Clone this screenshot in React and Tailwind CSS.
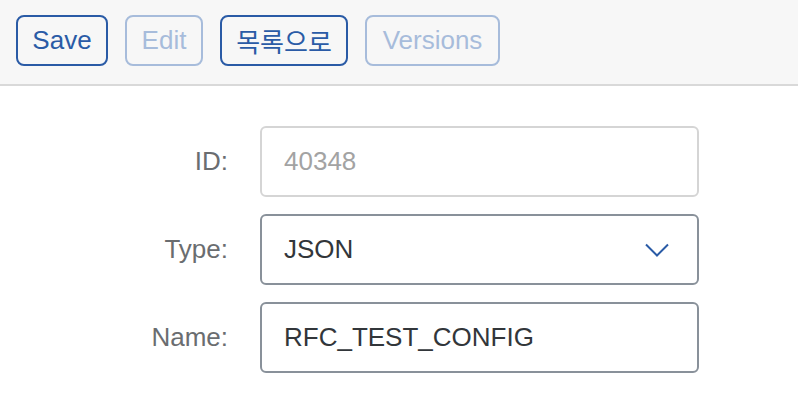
export default function App() {
  const font = { fontFamily: '"Liberation Sans", Arial, "Noto Sans CJK KR", sans-serif' };
  return (
    <div className="w-[798px] h-[418px] bg-white overflow-hidden" style={font}>
      <div className="h-[86px] bg-[#f7f7f7] border-b-2 border-[#d9d9d9] flex items-start gap-[17px] pl-4 pt-[15px]">
        <button className="w-[92px] h-[51px] border-2 border-[#2a5ba6] rounded-[8px] text-[26px] text-[#2a5ba6] flex items-center justify-center">Save</button>
        <button className="w-[78px] h-[51px] border-2 border-[#a7bcdb] rounded-[8px] text-[26px] text-[#a7bcdb] flex items-center justify-center">Edit</button>
        <button className="w-[128px] h-[51px] border-2 border-[#2a5ba6] rounded-[8px] text-[26px] text-[#2a5ba6] flex items-center justify-center" style={{ fontFamily: '"Noto Sans CJK KR", sans-serif' }}>목록으로</button>
        <button className="w-[135px] h-[51px] border-2 border-[#a7bcdb] rounded-[8px] text-[26px] text-[#a7bcdb] flex items-center justify-center">Versions</button>
      </div>
      <div className="pt-10 flex flex-col gap-[17px]">
        <div className="flex items-center">
          <div className="w-[228px] text-right text-[26px] text-[#6a6d70]">ID:</div>
          <div className="ml-8 w-[439px] h-[71px] border-2 border-[#d5d5d5] rounded-[6px] flex items-center pl-[22px] text-[26px] text-[#a3a3a3]">40348</div>
        </div>
        <div className="flex items-center">
          <div className="w-[228px] text-right text-[26px] text-[#6a6d70]">Type:</div>
          <div className="ml-8 w-[439px] h-[71px] border-2 border-[#89919a] rounded-[6px] flex items-center justify-between pl-[22px] pr-[28px] text-[26px] text-[#32363a]">
            <span>JSON</span>
            <svg width="24" height="14" viewBox="0 0 24 14" fill="none">
              <path d="M1 1.5 L12 12.5 L23 1.5" stroke="#2a5ba6" strokeWidth="2" />
            </svg>
          </div>
        </div>
        <div className="flex items-center">
          <div className="w-[228px] text-right text-[26px] text-[#6a6d70]">Name:</div>
          <div className="ml-8 w-[439px] h-[71px] border-2 border-[#89919a] rounded-[6px] flex items-center pl-[22px] text-[26px] text-[#32363a]">RFC_TEST_CONFIG</div>
        </div>
      </div>
    </div>
  );
}
